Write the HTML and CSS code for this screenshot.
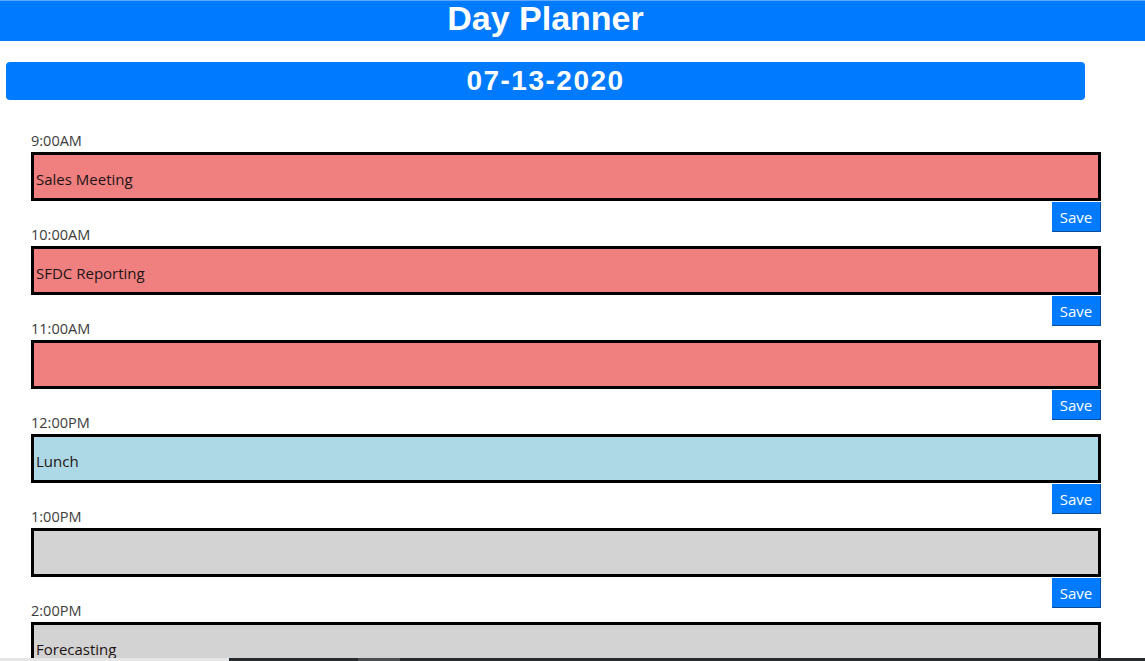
FILE: index.html
```html
<!DOCTYPE html>
<html>
<head>
<meta charset="utf-8">
<title>Day Planner</title>
<link rel="stylesheet" href="styles.css">
</head>
<body>
<header class="top">
  <h1 class="title">Day Planner</h1>
</header>
<div class="datebar">07-13-2020</div>
<main class="planner">
  <section class="row">
    <div class="hour">9:00AM</div>
    <textarea class="slot past">Sales Meeting</textarea>
    <div class="actions"><button class="save">Save</button></div>
  </section>
  <section class="row">
    <div class="hour">10:00AM</div>
    <textarea class="slot past">SFDC Reporting</textarea>
    <div class="actions"><button class="save">Save</button></div>
  </section>
  <section class="row">
    <div class="hour">11:00AM</div>
    <textarea class="slot past"></textarea>
    <div class="actions"><button class="save">Save</button></div>
  </section>
  <section class="row">
    <div class="hour">12:00PM</div>
    <textarea class="slot present">Lunch</textarea>
    <div class="actions"><button class="save">Save</button></div>
  </section>
  <section class="row">
    <div class="hour">1:00PM</div>
    <textarea class="slot future"></textarea>
    <div class="actions"><button class="save">Save</button></div>
  </section>
  <section class="row">
    <div class="hour">2:00PM</div>
    <textarea class="slot future">Forecasting</textarea>
  </section>
</main>
<div class="bottombar">
  <div class="bb-light"></div>
  <div class="bb-dark"><div class="bb-thumb"></div></div>
</div>
</body>
</html>
```
FILE: styles.css
```css
html, body {
  margin: 0;
  padding: 0;
  background: #ffffff;
  font-family: "Open Sans", "Noto Sans", sans-serif;
  overflow: hidden;
}

.top {
  background: #007bff;
  border-top: 1px solid #5ca8ff;
  height: 40px;
}

.title {
  margin: 0;
  width: 1091px;
  text-align: center;
  color: #ffffff;
  font-family: "Liberation Sans", Arial, sans-serif;
  font-weight: bold;
  font-size: 34px;
  line-height: 34px;
}

.datebar {
  margin: 21px 0 0 6px;
  width: 1079px;
  height: 38px;
  background: #007bff;
  border-radius: 4px;
  color: #ffffff;
  text-align: center;
  font-family: "Liberation Sans", Arial, sans-serif;
  font-weight: bold;
  font-size: 28px;
  letter-spacing: 1.5px;
  line-height: 38px;
}

.planner {
  padding: 31px 44px 0 31px;
}

.row {
  display: flex;
  flex-direction: column;
}

.hour {
  height: 21px;
  font-size: 14.5px;
  line-height: 20px;
  color: #3c3c3c;
}

.slot {
  display: block;
  box-sizing: border-box;
  width: 100%;
  height: 49px;
  margin: 0;
  border: 3px solid #000000;
  padding: 14px 2px 0;
  font-family: "Open Sans", "Noto Sans", sans-serif;
  font-size: 15px;
  line-height: 20px;
  color: #1e1414;
  resize: none;
  overflow: hidden;
  outline: none;
}

.past { background: #f08080; }
.present { background: #add8e6; }
.future { background: #d3d3d3; }

.actions {
  display: flex;
  justify-content: flex-end;
  margin-top: 1px;
  margin-bottom: -7px;
}

.save {
  box-sizing: border-box;
  width: 49px;
  height: 30px;
  padding: 0;
  background: #007bff;
  color: #ffffff;
  border: none;
  border-right: 1px solid #0a4f9e;
  border-bottom: 1px solid #0a4f9e;
  font-family: "Open Sans", "Noto Sans", sans-serif;
  font-size: 15px;
  line-height: 28px;
}

.bottombar {
  position: fixed;
  left: 0;
  right: 0;
  bottom: 0;
  height: 3px;
  display: flex;
}

.bb-light {
  width: 229px;
  background: #e6e6e6;
}

.bb-dark {
  flex: 1;
  background: #272a2e;
  padding-left: 129px;
}

.bb-thumb {
  width: 42px;
  height: 3px;
  background: #4a4d52;
}
```
